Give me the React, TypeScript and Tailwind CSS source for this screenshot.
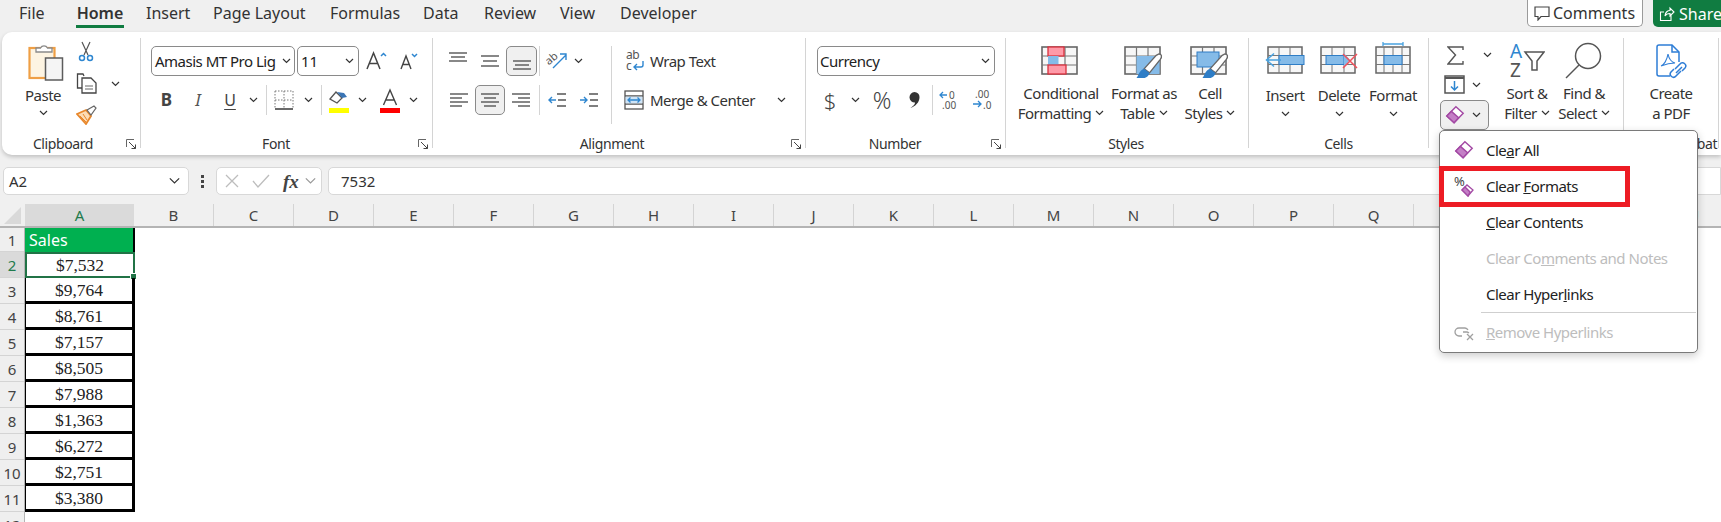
import React from 'react';

const sales = ['$7,532', '$9,764', '$8,761', '$7,157', '$8,505', '$7,988', '$1,363', '$6,272', '$2,751', '$3,380'];
const columns = ['B', 'C', 'D', 'E', 'F', 'G', 'H', 'I', 'J', 'K', 'L', 'M', 'N', 'O', 'P', 'Q', 'R', 'S', 'T', 'U'];

function Chevron({ color = '#333', large }: { color?: string; large?: boolean }) {
  return (
    <svg className="shrink-0" width={large ? 13 : 9} height={large ? 8 : 6} viewBox="0 0 9 6" fill="none">
      <path d="M1 1l3.5 3.5L8 1" stroke={color} strokeWidth={large ? 0.9 : 1.2} />
    </svg>
  );
}

function Launcher() {
  return (
    <svg width="11" height="11" viewBox="0 0 11 11" fill="none">
      <path d="M.5 8V.5H8" stroke="#666" />
      <path d="M3 3l6.5 6.5M9.5 5.5v4h-4" stroke="#444" />
    </svg>
  );
}

function Group({ label, width, labelWidth, launcher, children }: { label: string; width: string; labelWidth: string; launcher?: boolean; children: React.ReactNode }) {
  return (
    <div className={`${width} h-[110px] shrink-0 flex flex-col border-r border-[#d4d4d4]`}>
      <div className="flex-1 min-h-0">{children}</div>
      <div className="h-[12px] pt-[2px] flex items-center text-[14px] tracking-[-0.4px] text-[#333]">
        <span className={`${labelWidth} text-center whitespace-nowrap`}>{label}</span>
        {launcher && <span className="ml-auto mr-[3px] flex mt-[2px]"><Launcher /></span>}
      </div>
    </div>
  );
}

function Eraser({ size = 30 }: { size?: number }) {
  return (
    <svg width={size} height={size} viewBox="0 0 22 22" fill="none">
      <path d="M2 12L12 2l8 7-10 10.5z" fill="#fff" stroke="#a349a4" strokeWidth="1.6" />
      <path d="M2 12l5-5 8 7-5 5.5z" fill="#c47fc6" stroke="#a349a4" strokeWidth="1.6" />
    </svg>
  );
}

function GridIcon({ children }: { children?: React.ReactNode }) {
  return (
    <svg width="40" height="32" viewBox="0 0 40 32" fill="none">
      <rect x="1" y="1" width="35" height="27" fill="#f7f7f7" stroke="#666" strokeWidth="1.6" />
      <path d="M1 10h35M1 19h35M12.5 1v27M24 1v27" stroke="#777" strokeWidth="1.2" />
      {children}
    </svg>
  );
}

function Brush() {
  return (
    <g transform="translate(12 8) scale(1.35)">
      <path d="M17 0c2 0 2.5 2 1 4L10 14l-4-3L15 1z" fill="#fff" stroke="#666" strokeWidth="1" />
      <path d="M0 18c2-1 2-6 6-7l4 3c-1 4-6 5-10 4z" fill="#2e7dc6" />
    </g>
  );
}

function LargeAction({ width, icon, top, bottom, chevron, pt = 'pt-[8px]' }: { width: string; icon: React.ReactNode; top: string; bottom?: string; chevron?: boolean; pt?: string }) {
  return (
    <div className={`${width} shrink-0 flex flex-col items-center`}>
      <div className={`h-[45px] ${pt} flex justify-center`}>{icon}</div>
      <div className="h-[20px] leading-[20px] whitespace-nowrap text-[15px] tracking-[-0.5px] text-[#333]">{top}</div>
      <div className="h-[20px] leading-[20px] whitespace-nowrap text-[15px] tracking-[-0.5px] text-[#333] flex items-center gap-[4px]">
        {bottom}
        {chevron && <Chevron />}
      </div>
    </div>
  );
}

function Cell({ width, children, active }: { width: string; children: React.ReactNode; active?: boolean }) {
  return (
    <div className={`${width} h-[30px] shrink-0 flex items-center justify-center ${active ? 'bg-[#f0f0f0] border border-[#8a8a8a] rounded-[5px]' : ''}`}>
      {children}
    </div>
  );
}

function Lines({ ys, widths }: { ys: number[]; widths: [number, number][] }) {
  return (
    <svg width="22" height="20" viewBox="0 0 22 20" fill="none">
      {ys.map((y, i) => (
        <path key={i} d={`M${widths[i][0]} ${y}H${widths[i][1]}`} stroke="#555" strokeWidth="1.4" />
      ))}
    </svg>
  );
}

function Clipboard() {
  return (
    <div className="flex pl-[12px]">
      <div className="w-[58px] flex flex-col items-center pt-[4px]">
        <svg className="ml-[6px]" width="36" height="39" viewBox="0 0 36 39" fill="none">
          <rect x="1.5" y="6" width="25" height="30" fill="#fdf4e2" stroke="#ef9f45" strokeWidth="2.2" />
          <path d="M8 10V6h4.5a4 4 0 0 1 7 0H24v4z" fill="#fff" stroke="#8a8a8a" strokeWidth="1.3" />
          <rect x="17.5" y="16" width="17" height="22" fill="#f5f5f5" stroke="#5c5c5c" strokeWidth="1.5" />
        </svg>
        <div className="mt-[4px] h-[20px] leading-[20px] text-[15px] tracking-[-0.5px] text-[#333]">Paste</div>
        <div className="mt-[5px] flex"><Chevron /></div>
      </div>
      <div className="w-[28px] flex flex-col items-center pt-[3px]">
        <svg width="16" height="21" viewBox="0 0 16 21" fill="none">
          <path d="M4 1l6 13M12 1L6 14" stroke="#555" strokeWidth="1.2" />
          <circle cx="4" cy="17" r="2.5" stroke="#2e86d0" strokeWidth="1.5" />
          <circle cx="12" cy="17" r="2.5" stroke="#2e86d0" strokeWidth="1.5" />
        </svg>
        <svg className="mt-[11px]" width="21" height="21" viewBox="0 0 21 21" fill="none">
          <path d="M7 15H1.5V1H7l1 2" stroke="#444" strokeWidth="1.3" />
          <path d="M6 5h9l5 5v10H6z" fill="#fff" stroke="#444" strokeWidth="1.3" />
          <path d="M9 13h8M9 16h8" stroke="#666" />
        </svg>
        <svg className="mt-[11px]" width="21" height="20" viewBox="0 0 21 20" fill="none">
          <path d="M1 9l9-4 5 6-5 8z" fill="#fcdcb4" stroke="#e8872b" strokeWidth="1.8" />
          <path d="M4 11l6 6M7 9l4 6" stroke="#e8872b" />
          <path d="M11 5l7-4 2 2-5 7z" fill="#fff" stroke="#666" strokeWidth="1.2" />
        </svg>
      </div>
      <div className="mt-[43px] ml-[11px] flex h-[6px]"><Chevron /></div>
    </div>
  );
}

function Font() {
  return (
    <div className="pl-[10px] pt-[8px]">
      <div className="flex items-center h-[30px]">
        <div className="w-[144px] h-[30px] border border-[#8a8a8a] rounded-[5px] flex items-center pl-[3px] pr-[3px] text-[15px] tracking-[-0.5px] text-[#222] whitespace-nowrap">
          <span className="flex-1">Amasis MT Pro Lig</span>
          <Chevron />
        </div>
        <div className="ml-[2px] w-[62px] h-[30px] border border-[#8a8a8a] rounded-[5px] flex items-center pl-[3px] pr-[4px] text-[15px] text-[#222]">
          <span className="flex-1">11</span>
          <Chevron />
        </div>
        <svg className="ml-[7px]" width="21" height="20" viewBox="0 0 21 20" fill="none">
          <path d="M1 18L7.5 2 14 18M3.5 12.5h8" stroke="#444" strokeWidth="1.5" />
          <path d="M15 5l2.5-2.5L20 5" stroke="#2e86d0" strokeWidth="1.5" />
        </svg>
        <svg className="ml-[13px]" width="18" height="19" viewBox="0 0 18 19" fill="none">
          <path d="M1 17L6 4l5 13M2.8 12.5h6.5" stroke="#444" strokeWidth="1.4" />
          <path d="M12 2l2.5 2.5L17 2" stroke="#2e86d0" strokeWidth="1.5" />
        </svg>
      </div>
      <div className="flex items-center h-[30px] mt-[9px]">
        <Cell width="w-[31px]"><span className="font-bold text-[17px] text-[#444]">B</span></Cell>
        <Cell width="w-[32px]"><span className="italic text-[17px] text-[#555]">I</span></Cell>
        <Cell width="w-[32px]">
          <span className="text-[16px] text-[#444] underline underline-offset-[3px]">U</span>
        </Cell>
        <Cell width="w-[14px]"><Chevron /></Cell>
        <div className="w-[12px] h-[30px] flex justify-center"><div className="w-px h-full bg-[#d4d4d4]" /></div>
        <Cell width="w-[24px]">
          <svg width="20" height="20" viewBox="0 0 20 20" fill="none">
            <path d="M1 1h18M1 1v18M19 1v18M10 1v18M1 10h18" stroke="#777" strokeDasharray="1.5 1.5" />
            <path d="M1 19h18" stroke="#444" strokeWidth="1.6" />
          </svg>
        </Cell>
        <Cell width="w-[24px]"><Chevron /></Cell>
        <div className="w-[2px] h-[30px] flex justify-center"><div className="w-px h-full bg-[#d4d4d4]" /></div>
        <Cell width="w-[34px]">
          <svg width="22" height="25" viewBox="0 0 22 25" fill="none">
            <path d="M2 11l6-7 6 6-5 5z" fill="#fff" stroke="#555" strokeWidth="1.3" />
            <path d="M9 4l7 1 3 4-5 1z" fill="#3a75b5" />
            <path d="M1 20h20v5H1z" fill="#ffff00" />
          </svg>
        </Cell>
        <Cell width="w-[12px]"><Chevron /></Cell>
        <Cell width="w-[44px]">
          <svg width="22" height="25" viewBox="0 0 22 25" fill="none">
            <path d="M4.5 17L11 2l6.5 15M6.8 12h8.4" stroke="#444" strokeWidth="1.4" />
            <path d="M1 20h20v5H1z" fill="#ff0000" />
          </svg>
        </Cell>
        <Cell width="w-[2px]"><Chevron /></Cell>
      </div>
    </div>
  );
}

function Alignment() {
  return (
    <div className="flex pl-[9px] pt-[8px]">
      <div className="w-[169px]">
        <div className="flex items-center h-[30px]">
          <Cell width="w-[32px]"><Lines ys={[2, 6, 10]} widths={[[2, 20], [4, 18], [2, 20]]} /></Cell>
          <Cell width="w-[32px]"><Lines ys={[5, 10, 15]} widths={[[2, 20], [4, 18], [2, 20]]} /></Cell>
          <Cell width="w-[31px]" active><Lines ys={[10, 14, 18]} widths={[[2, 20], [4, 18], [2, 20]]} /></Cell>
          <div className="ml-[2px] w-px h-[30px] bg-[#d4d4d4]" />
          <Cell width="w-[34px]">
            <svg width="22" height="22" viewBox="0 0 22 22" fill="none">
              <path d="M7 18L20 5M14 4h6v6" stroke="#2e86d0" strokeWidth="1.4" />
              <text x="0" y="12" fontSize="11" fill="#555" transform="rotate(-40 6 10)" fontFamily="Noto Sans, sans-serif">ab</text>
            </svg>
          </Cell>
          <Chevron />
        </div>
        <div className="flex items-center h-[30px] mt-[9px]">
          <Cell width="w-[33px]"><Lines ys={[4, 8, 12, 16]} widths={[[2, 20], [2, 14], [2, 20], [2, 14]]} /></Cell>
          <Cell width="w-[30px]" active><Lines ys={[4, 8, 12, 16]} widths={[[2, 20], [5, 17], [2, 20], [5, 17]]} /></Cell>
          <Cell width="w-[32px]"><Lines ys={[4, 8, 12, 16]} widths={[[2, 20], [8, 20], [2, 20], [8, 20]]} /></Cell>
          <div className="ml-[2px] w-px h-[30px] bg-[#d4d4d4]" />
          <Cell width="w-[34px]">
            <svg width="20" height="16" viewBox="0 0 20 16" fill="none">
              <path d="M10 2h9M10 14h9M11 8h8" stroke="#555" strokeWidth="1.3" />
              <path d="M2 8h7M5 5L2 8l3 3" stroke="#2e86d0" strokeWidth="1.4" />
            </svg>
          </Cell>
          <Cell width="w-[30px]">
            <svg width="20" height="16" viewBox="0 0 20 16" fill="none">
              <path d="M10 2h9M10 14h9M11 8h8" stroke="#555" strokeWidth="1.3" />
              <path d="M1 8h7M5 5l3 3-3 3" stroke="#2e86d0" strokeWidth="1.4" />
            </svg>
          </Cell>
        </div>
      </div>
      <div className="w-px h-[78px] bg-[#d4d4d4]" />
      <div className="flex-1 text-[15px] tracking-[-0.5px] text-[#333] whitespace-nowrap">
        <div className="flex items-center h-[30px]">
          <div className="ml-[13px] w-[25px] flex justify-start">
            <svg width="20" height="22" viewBox="0 0 20 22" fill="none">
              <text x="1" y="9" fontSize="12" fill="#555" fontFamily="Noto Sans, sans-serif">ab</text>
              <text x="1" y="20" fontSize="12" fill="#555" fontFamily="Noto Sans, sans-serif">c</text>
              <path d="M18 11v4a2 2 0 0 1-2 2H9M12 14l-3 3 3 3" stroke="#2e86d0" strokeWidth="1.4" />
            </svg>
          </div>
          <span>Wrap Text</span>
        </div>
        <div className="flex items-center h-[30px] mt-[9px]">
          <div className="ml-[12px] w-[26px] flex justify-start">
            <svg width="20" height="20" viewBox="0 0 20 20" fill="none">
              <rect x="1" y="1" width="18" height="18" fill="#fff" stroke="#555" strokeWidth="1.3" />
              <path d="M1 6h18M1 14h18" stroke="#555" strokeWidth="1.3" />
              <rect x="1.6" y="6.6" width="16.8" height="6.8" fill="#cfe4f6" />
              <path d="M4 10h12M6.5 7.5L4 10l2.5 2.5M13.5 7.5L16 10l-2.5 2.5" stroke="#2e86d0" strokeWidth="1.3" />
            </svg>
          </div>
          <span>Merge &amp; Center</span>
          <span className="ml-[22px] flex"><Chevron /></span>
        </div>
      </div>
    </div>
  );
}

function NumberGroup() {
  return (
    <div className="pl-[11px] pt-[8px]">
      <div className="w-[178px] h-[30px] border border-[#8a8a8a] rounded-[5px] flex items-center pl-[2px] pr-[4px] text-[15px] tracking-[-0.5px] text-[#222]">
        <span className="flex-1">Currency</span>
        <Chevron />
      </div>
      <div className="flex items-center h-[30px] mt-[9px]">
        <Cell width="w-[26px]"><span className="text-[22px] font-light text-[#444]">$</span></Cell>
        <Cell width="w-[24px]"><Chevron /></Cell>
        <Cell width="w-[30px]"><span className="text-[23px] font-light text-[#444]">%</span></Cell>
        <Cell width="w-[34px]">
          <svg width="11" height="16" viewBox="0 0 11 16" fill="none">
            <path d="M5.5 0a5 5 0 0 1 5 5.2c0 5-4 9-9 10.800C5 13.500 6 12 6 10.500A5 5 0 1 1 5.500 0z" fill="#333" />
          </svg>
        </Cell>
        <div className="mr-[1px] ml-[1px] w-px h-[30px] bg-[#d4d4d4]" />
        <Cell width="w-[30px]">
          <svg width="22" height="22" viewBox="0 0 22 22" fill="none">
            <path d="M9 6H2M5 3L2 6l3 3" stroke="#2e86d0" strokeWidth="1.3" />
            <text x="11" y="10" fontSize="10" fill="#555" fontFamily="Noto Sans, sans-serif">0</text>
            <text x="4" y="20" fontSize="10" fill="#555" fontFamily="Noto Sans, sans-serif">.00</text>
          </svg>
        </Cell>
        <Cell width="w-[36px]">
          <svg width="22" height="22" viewBox="0 0 22 22" fill="none">
            <text x="4" y="9" fontSize="10" fill="#555" fontFamily="Noto Sans, sans-serif">.00</text>
            <path d="M2 15h8M7 12l3 3-3 3" stroke="#2e86d0" strokeWidth="1.3" />
            <text x="12" y="20" fontSize="10" fill="#555" fontFamily="Noto Sans, sans-serif">.0</text>
          </svg>
        </Cell>
      </div>
    </div>
  );
}

function Styles() {
  return (
    <div className="flex pl-[12px]">
      <LargeAction
        width="w-[86px]"
        top="Conditional"
        bottom="Formatting"
        chevron
        icon={
          <GridIcon>
            <rect x="7" y="1" width="16" height="9" fill="#ff9aa8" stroke="#d9303d" strokeWidth="1.3" />
            <rect x="7" y="10" width="10.5" height="9" fill="#85bbe8" />
            <rect x="7" y="19" width="18" height="9" fill="#ff9aa8" stroke="#d9303d" strokeWidth="1.3" />
          </GridIcon>
        }
      />
      <LargeAction
        width="w-[80px]"
        top="Format as"
        bottom="Table"
        chevron
        icon={
          <GridIcon>
            <rect x="12.5" y="10" width="23" height="18" fill="#85bbe8" />
            <Brush />
          </GridIcon>
        }
      />
      <LargeAction
        width="w-[52px]"
        top="Cell"
        bottom="Styles"
        chevron
        icon={
          <GridIcon>
            <rect x="7" y="6" width="22" height="15" fill="#85bbe8" stroke="#2e7dc6" />
            <Brush />
          </GridIcon>
        }
      />
    </div>
  );
}

function CellsGroup() {
  const action = (label: string, icon: React.ReactNode) => (
    <div className="w-[54px] shrink-0 flex flex-col items-center">
      <div className="h-[47px] pt-[8px]">{icon}</div>
      <div className="h-[20px] leading-[20px] text-[15px] tracking-[-0.5px] text-[#333]">{label}</div>
      <div className="h-[18px] flex items-center"><Chevron /></div>
    </div>
  );
  return (
    <div className="flex pl-[9px]">
      {action(
        'Insert',
        <svg width="40" height="30" viewBox="0 0 40 30" fill="none">
          <rect x="3" y="1" width="34" height="26" fill="#f7f7f7" stroke="#666" strokeWidth="1.5" />
          <path d="M3 9.5h34M3 18.5h34M14 1v26M25 1v26" stroke="#777" />
          <rect x="14" y="9.5" width="25" height="9" fill="#85bbe8" stroke="#2e7dc6" />
          <path d="M16 14H3M9 7.5L1.5 14 9 20.5" stroke="#4aa3e0" strokeWidth="1.5" />
        </svg>,
      )}
      {action(
        'Delete',
        <svg width="38" height="30" viewBox="0 0 38 30" fill="none">
          <rect x="1" y="1" width="34" height="26" fill="#f7f7f7" stroke="#666" strokeWidth="1.5" />
          <path d="M1 9.5h34M1 18.5h34M12 1v26M24 1v26" stroke="#777" />
          <rect x="6" y="9.5" width="18" height="9" fill="#85bbe8" stroke="#2e7dc6" />
          <path d="M24 7l6 7-6 7z" fill="#85bbe8" />
          <path d="M23 8l14 14M37 8L23 22" stroke="#f0505a" strokeWidth="1.5" />
        </svg>,
      )}
      {action(
        'Format',
        <svg width="36" height="34" viewBox="0 0 36 34" fill="none" className="-mt-[5px]">
          <path d="M8 1v4M28 1v4M8 3h20" stroke="#4aa3e0" strokeWidth="1.3" />
          <rect x="1" y="6" width="34" height="26" fill="#f7f7f7" stroke="#666" strokeWidth="1.5" />
          <path d="M1 14.5h34M1 23.5h34M9 6v26M27 6v26M18 6v26" stroke="#777" />
          <rect x="9" y="14.5" width="18" height="9" fill="#85bbe8" stroke="#2e7dc6" />
        </svg>,
      )}
    </div>
  );
}

function Editing() {
  return (
    <div className="flex pl-[11px]">
      <div className="w-[60px] flex flex-col">
        <div className="h-[31px] pt-[3px] flex items-center">
          <svg className="ml-[7px]" width="17" height="19" viewBox="0 0 17 19" fill="none">
            <path d="M16 4V1H1l7.5 8L1 18h15v-3" stroke="#555" strokeWidth="1.4" />
          </svg>
          <span className="ml-[19px] flex"><Chevron /></span>
        </div>
        <div className="h-[31px] flex items-center">
          <svg className="ml-[4px]" width="21" height="19" viewBox="0 0 21 19" fill="none">
            <rect x="1" y="1" width="19" height="17" fill="#fff" stroke="#555" strokeWidth="1.5" />
            <path d="M1 3h19" stroke="#555" strokeWidth="2" />
            <path d="M10.5 6v9M7 11.5l3.5 3.5 3.5-3.5" stroke="#2e86d0" strokeWidth="1.5" />
          </svg>
          <span className="ml-[7px] flex"><Chevron /></span>
        </div>
        <div className="w-[49px] h-[30px] border border-[#8a8a8a] rounded-[5px] bg-[#f0f0f0] flex items-center">
          <span className="ml-[4px] flex"><Eraser size={20} /></span>
          <span className="ml-[7px] flex"><Chevron /></span>
        </div>
      </div>
      <LargeAction
        width="w-[54px]"
        top="Sort &"
        bottom="Filter"
        chevron
        pt="pt-[4px]"
        icon={
          <svg width="36" height="36" viewBox="0 0 36 36" fill="none">
            <text x="1" y="16" fontSize="19" fill="#2e86d0" fontFamily="Noto Sans, sans-serif">A</text>
            <text x="1" y="35" fontSize="19" fill="#555" fontFamily="Noto Sans, sans-serif">Z</text>
            <path d="M16 10h19l-7 9v9h-5v-9z" fill="#fff" stroke="#555" strokeWidth="1.5" />
          </svg>
        }
      />
      <LargeAction
        width="w-[60px]"
        top="Find &"
        bottom="Select"
        chevron
        pt="pt-[4px]"
        icon={
          <svg width="38" height="37" viewBox="0 0 38 37" fill="none">
            <circle cx="23" cy="14" r="12.5" stroke="#555" strokeWidth="1.5" />
            <path d="M14 23L1 36" stroke="#555" strokeWidth="1.5" />
          </svg>
        }
      />
    </div>
  );
}

function Pdf() {
  return (
    <div className="flex justify-center">
      <LargeAction
        width="w-[70px]"
        top="Create"
        bottom="a PDF"
        pt="pt-[6px]"
        icon={
          <svg width="33" height="36" viewBox="0 0 33 36" fill="none">
            <path d="M24 18V8l-7-7H4a2 2 0 0 0-2 2v27a2 2 0 0 0 2 2h11" stroke="#2e7dd6" strokeWidth="1.5" />
            <path d="M17 1v7h7" stroke="#2e7dd6" strokeWidth="1.5" />
            <path d="M6 22c3-1 6-6 7-12 1 5 3 8 7 9-5 0-9 1-14 3z" stroke="#2e7dd6" strokeWidth="1.1" />
            <path d="M20 25l5-5a3 3 0 0 1 5 4l-3 3M26 27l-5 5a3 3 0 0 1-5-4l3-3M21 29l6-6" stroke="#2e7dd6" strokeWidth="1.5" />
          </svg>
        }
      />
    </div>
  );
}

function ClearMenu() {
  const row = 'h-[36px] flex items-center';
  return (
    <div className="absolute left-[1439px] top-[130px] w-[259px] h-[223px] bg-white border border-[#7a7a7a] rounded-[5px] shadow-[0_3px_8px_rgba(0,0,0,0.2)] text-[15px] tracking-[-0.5px] text-[#222] whitespace-nowrap pt-[1px]">
      <div className={row}>
        <span className="w-[46px] pl-[14px] flex"><Eraser size={20} /></span>
        <span>Cle<u>a</u>r All</span>
      </div>
      <div className={row}>
        <span className="w-[46px] pl-[14px] flex">
          <svg width="20" height="22" viewBox="0 0 20 22" fill="none">
            <text x="0" y="11" fontSize="13" fill="#444" fontFamily="Noto Sans, sans-serif">%</text>
            <path d="M8 15l5-5 6 5-5 6z" fill="#fff" stroke="#a349a4" strokeWidth="1.3" />
            <path d="M8 15l3-3 5 5-2 4z" fill="#c47fc6" stroke="#a349a4" strokeWidth="1.3" />
          </svg>
        </span>
        <span>Clear <u>F</u>ormats</span>
      </div>
      <div className={row}>
        <span className="w-[46px]" />
        <span><u>C</u>lear Contents</span>
      </div>
      <div className={`${row} text-[#bdbdbd]`}>
        <span className="w-[46px]" />
        <span>Clear Co<u>m</u>ments and Notes</span>
      </div>
      <div className={row}>
        <span className="w-[46px]" />
        <span>Clear Hyper<u>l</u>inks</span>
      </div>
      <div className="ml-[41px] mr-[1px] h-px bg-[#cfcfcf]" />
      <div className={`${row} mt-[1px] text-[#bdbdbd]`}>
        <span className="w-[46px] pl-[14px] flex">
          <svg width="21" height="18" viewBox="0 0 21 18" fill="none">
            <path d="M8 13H5a4 4 0 0 1 0-8h6a4 4 0 0 1 3 2M9 9h4a4 4 0 0 1 2 1" stroke="#a0a0a0" strokeWidth="1.3" />
            <path d="M13 11l6 6M19 11l-6 6" stroke="#a0a0a0" strokeWidth="1.3" />
          </svg>
        </span>
        <span><u>R</u>emove Hyperlinks</span>
      </div>
      <div className="absolute left-[-1px] top-[35px] w-[191px] h-[41px] border-[5px] border-[#ed1c24]" />
    </div>
  );
}

export default function App() {
  return (
    <div className="relative w-[1721px] h-[522px] overflow-hidden bg-[#f0f0f0] [font-family:'Noto_Sans',sans-serif]">
      <div className="h-[32px] flex pl-[19px] text-[16px] text-[#333] whitespace-nowrap">
        <div className="w-[58px] h-[27px] leading-[27px]">File</div>
        <div className="w-[69px]">
          <div className="w-[48px] -ml-[1px] h-[28px] leading-[26px] text-center font-semibold border-b-[3px] border-[#107c41]">Home</div>
        </div>
        <div className="w-[67px] h-[27px] leading-[27px]">Insert</div>
        <div className="w-[117px] h-[27px] leading-[27px]">Page Layout</div>
        <div className="w-[93px] h-[27px] leading-[27px]">Formulas</div>
        <div className="w-[61px] h-[27px] leading-[27px]">Data</div>
        <div className="w-[76px] h-[27px] leading-[27px]">Review</div>
        <div className="w-[60px] h-[27px] leading-[27px]">View</div>
        <div className="h-[27px] leading-[27px]">Developer</div>
        <div className="ml-auto flex gap-[10px]">
          <div className="w-[116px] h-[27px] bg-white border border-[#9a9a9a] border-t-0 rounded-b-[5px] flex items-center pl-[6px]">
            <svg width="16" height="15" viewBox="0 0 16 15" fill="none">
              <path d="M1 1h14v9.5H7l-3 3.5v-3.5H1z" stroke="#444" strokeWidth="1.2" />
            </svg>
            <span className="ml-[3px]">Comments</span>
          </div>
          <div className="w-[68px] h-[27px] bg-[#107c41] rounded-bl-[5px] text-white flex items-center pl-[6px]">
            <svg className="shrink-0" width="16" height="16" viewBox="0 0 16 16" fill="none">
              <path d="M12 9v5.5H1.5V6H5M6 10c0-4 3-5.5 5-5.5V2l4 4-4 4V7.5C9 7.5 7 8 6 10z" stroke="#fff" strokeWidth="1.1" />
            </svg>
            <span className="ml-[4px]">Share</span>
          </div>
        </div>
      </div>

      <div className="ml-[2px] h-[123px] pt-[6px] bg-white rounded-l-[10px] shadow-[0_2px_4px_rgba(0,0,0,0.2)] flex">
        <Group label="Clipboard" width="w-[139px]" labelWidth="w-[122px]" launcher><Clipboard /></Group>
        <Group label="Font" width="w-[292px]" labelWidth="w-[270px]" launcher><Font /></Group>
        <Group label="Alignment" width="w-[373px]" labelWidth="w-[358px]" launcher><Alignment /></Group>
        <Group label="Number" width="w-[200px]" labelWidth="w-[178px]" launcher><NumberGroup /></Group>
        <Group label="Styles" width="w-[243px]" labelWidth="w-[240px]"><Styles /></Group>
        <Group label="Cells" width="w-[180px]" labelWidth="w-[180px]"><CellsGroup /></Group>
        <Group label="Editing" width="w-[195px]" labelWidth="w-[195px]"><Editing /></Group>
        <Group label="Adobe Acrobat" width="w-[95px]" labelWidth="w-[95px]"><Pdf /></Group>
      </div>

      <div className="h-[41px] pt-[12px] flex text-[15px] text-[#333]">
        <div className="ml-[3px] w-[186px] h-[28px] bg-white border border-[#d8d8d8] rounded-[5px] flex items-center pl-[5px] pr-[7px]">
          <span className="flex-1">A2</span>
          <Chevron large />
        </div>
        <div className="w-[27px] h-[28px] flex flex-col items-center justify-center gap-[2px]">
          <div className="w-[3px] h-[3px] bg-[#444]" />
          <div className="w-[3px] h-[3px] bg-[#444]" />
          <div className="w-[3px] h-[3px] bg-[#444]" />
        </div>
        <div className="w-[106px] h-[28px] bg-white border border-[#d8d8d8] rounded-[5px] flex items-center pl-[8px]">
          <svg width="14" height="14" viewBox="0 0 14 14" fill="none">
            <path d="M1 1l12 12M13 1L1 13" stroke="#bdbdbd" strokeWidth="1.3" />
          </svg>
          <svg className="ml-[13px]" width="18" height="14" viewBox="0 0 18 14" fill="none">
            <path d="M1 7l5 6L17 1" stroke="#bdbdbd" strokeWidth="1.3" />
          </svg>
          <span className="ml-[13px] italic font-bold text-[19px] leading-none text-[#444] [font-family:'Liberation_Serif',serif]">fx</span>
          <span className="ml-[5px] flex"><Chevron color="#999" large /></span>
        </div>
        <div className="ml-[6px] flex-1 h-[28px] bg-white border border-[#d8d8d8] rounded-l-[5px] flex items-center pl-[12px]">7532</div>
      </div>

      <div className="h-[32px] pt-[8px] flex text-[15px] text-[#444] border-b-2 border-[#b4b4b4]">
        <div className="w-[25px] shrink-0 flex justify-center items-center">
          <svg width="17" height="17" viewBox="0 0 17 17"><path d="M17 0v17H0z" fill="#d9d9d9" /></svg>
        </div>
        <div className="w-[109px] shrink-0 bg-[#dadada] text-center text-[#1f7a4d] leading-[22px]">A</div>
        {columns.map((c) => (
          <div key={c} className="w-[80px] shrink-0 text-center leading-[22px] border-r border-[#d4d4d4]">{c}</div>
        ))}
      </div>

      <div className="flex bg-white h-[300px]">
        <div className="w-[25px] shrink-0 bg-[#efefef] border-r border-[#b4b4b4] text-[15px] text-[#444] text-center">
          <div className="h-[24px] leading-[24px] border-b border-[#d4d4d4]">1</div>
          <div className="h-[26px] leading-[26px] bg-[#dadada] text-[#1f7a4d] border-b border-[#d4d4d4]">2</div>
          {[3, 4, 5, 6, 7, 8, 9, 10, 11, 12].map((n) => (
            <div key={n} className="h-[26px] leading-[26px] border-b border-[#d4d4d4]">{n}</div>
          ))}
        </div>
        <div className="w-[110px] shrink-0">
          <div className="h-[24px] leading-[24px] bg-[#00b050] text-white text-[16px] pl-[4px] border-r-[2px] border-black">Sales</div>
          {sales.map((v, i) => (
            <div
              key={v}
              className={`relative h-[26px] text-center text-[17.5px] text-[#222] [font-family:'Liberation_Serif',serif] ${i === 0 ? 'leading-[22px] border-2 border-[#217346]' : 'leading-[25px] border-r-[3px] border-b-[3px] border-l border-black'}`}
            >
              {v}
              {i === 0 && <div className="absolute right-[-4px] bottom-[-4px] w-[7px] h-[7px] bg-[#217346] border border-white" />}
            </div>
          ))}
        </div>
      </div>

      <ClearMenu />
    </div>
  );
}
